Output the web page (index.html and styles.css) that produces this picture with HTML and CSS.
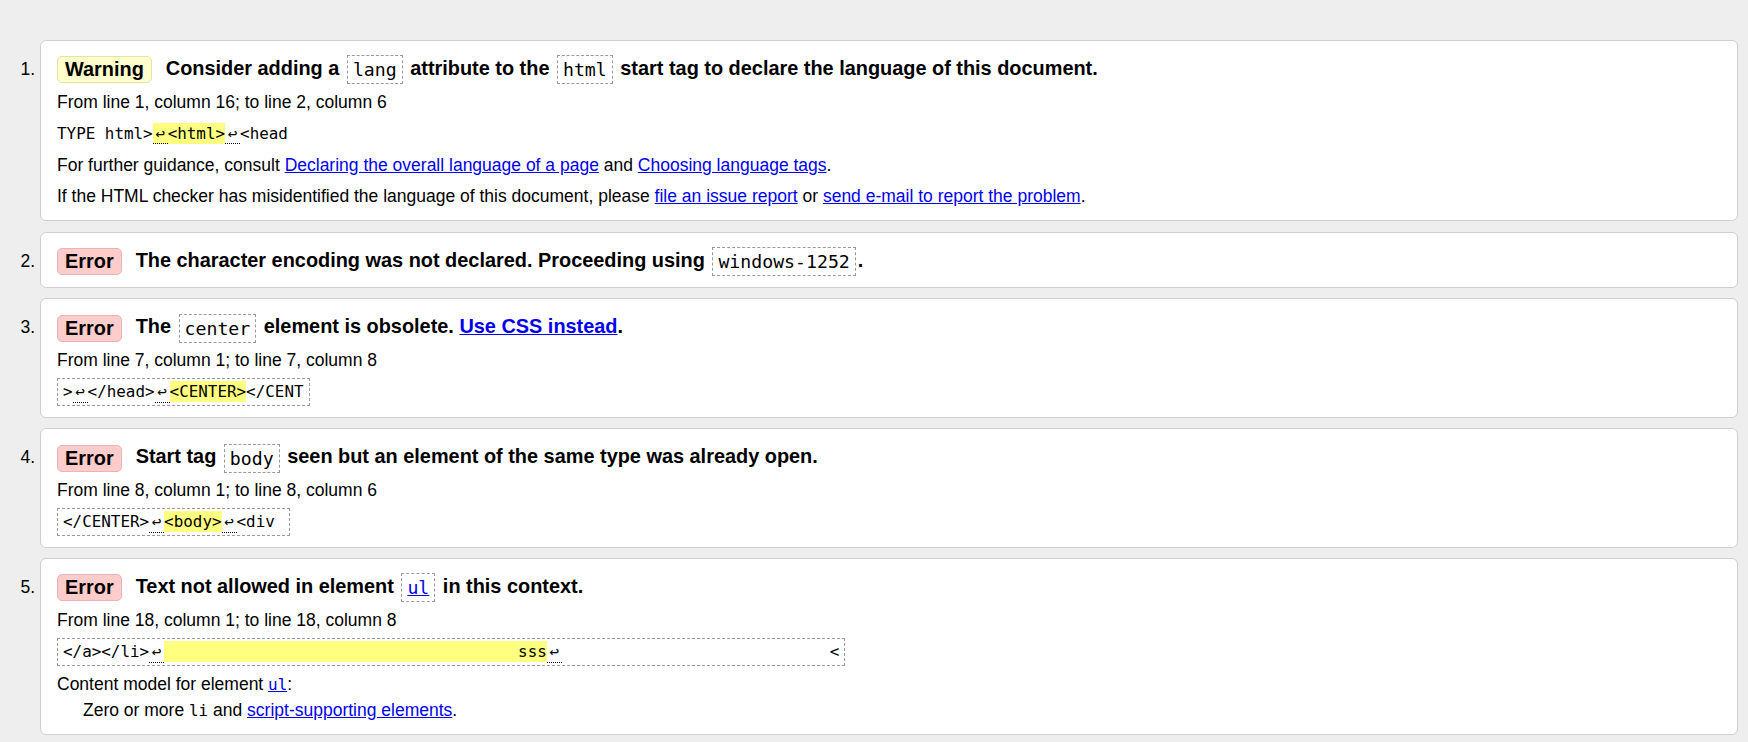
FILE: index.html
```html
<!DOCTYPE html>
<html lang="en">
<head>
<meta charset="utf-8">
<title>Nu Html Checker – results</title>
<link rel="stylesheet" href="styles.css">
</head>
<body>
<ol class="results">
  <li class="msg">
    <p class="head"><strong class="badge warn">Warning</strong>Consider adding a <code class="tag">lang</code> attribute to the <code class="tag">html</code> start tag to declare the language of this document.</p>
    <p class="loc">From line 1, column 16; to line 2, column 6</p>
    <p class="extract plain"><code>TYPE html&gt;<b><span class="lf">↩</span>&lt;html&gt;</b><span class="lf">↩</span>&lt;head</code></p>
    <p class="note">For further guidance, consult <a href="#">Declaring the overall language of a page</a> and <a href="#">Choosing language tags</a>.</p>
    <p class="note">If the HTML checker has misidentified the language of this document, please <a href="#">file an issue report</a> or <a href="#">send e-mail to report the problem</a>.</p>
  </li>
  <li class="msg">
    <p class="head"><strong class="badge err">Error</strong>The character encoding was not declared. Proceeding using <code class="tag">windows-1252</code>.</p>
  </li>
  <li class="msg">
    <p class="head"><strong class="badge err">Error</strong>The <code class="tag">center</code> element is obsolete. <a href="#">Use CSS instead</a>.</p>
    <p class="loc">From line 7, column 1; to line 7, column 8</p>
    <p class="extract box"><code>&gt;<span class="lf">↩</span>&lt;/head&gt;<span class="lf">↩</span><b>&lt;CENTER&gt;</b>&lt;/CENT</code></p>
  </li>
  <li class="msg">
    <p class="head"><strong class="badge err">Error</strong>Start tag <code class="tag">body</code> seen but an element of the same type was already open.</p>
    <p class="loc">From line 8, column 1; to line 8, column 6</p>
    <p class="extract box"><code>&lt;/CENTER&gt;<span class="lf">↩</span><b>&lt;body&gt;</b><span class="lf">↩</span>&lt;div </code></p>
  </li>
  <li class="msg">
    <p class="head"><strong class="badge err">Error</strong>Text not allowed in element <code class="tag"><a href="#">ul</a></code> in this context.</p>
    <p class="loc">From line 18, column 1; to line 18, column 8</p>
    <p class="extract box"><code>&lt;/a&gt;&lt;/li&gt;<span class="lf">↩</span><b>                                     sss</b><span class="lf">↩</span>                            &lt;</code></p>
    <dl class="model">
      <dt>Content model for element <code><a href="#">ul</a></code>:</dt>
      <dd>Zero or more <code>li</code> and <a href="#">script-supporting elements</a>.</dd>
    </dl>
  </li>
</ol>
</body>
</html>
```

FILE: styles.css
```css
* { box-sizing: border-box; }
html, body { margin: 0; padding: 0; background: #eeeeee; }
body {
  font-family: "Liberation Sans", Arial, sans-serif;
  font-size: 17.5px;
  color: #000;
}
a { color: #0000ee; text-decoration: underline; }

.results {
  margin: 40px 10px 0 40px;
  padding: 0;
  list-style: decimal outside;
}
.msg {
  background: #fff;
  border: 1px solid #cfcfcf;
  border-radius: 6px;
  padding: 13px 16px 11px;
  margin: 0 0 10.5px;
}
.msg p { margin: 0; line-height: 19px; }
.msg > :last-child { margin-bottom: 3px; }
.msg > .head:last-child { margin-bottom: 1px; }
.msg > .extract.box:last-child { margin-bottom: 0; }

.msg .head {
  font-weight: bold;
  font-size: 19.9px;
  line-height: 29px;
  height: 29px;
}
.badge {
  display: inline-block;
  vertical-align: middle;
  line-height: 19px;
  padding: 3px 7px;
  border: 1px solid;
  border-radius: 5px;
  margin-right: 14px;
  font-weight: bold;
}
.badge.warn { background: #ffffcc; border-color: #e3e3a8; }
.badge.err { background: #ffcccc; border-color: #e8b4b4; }

code {
  font-family: "DejaVu Sans Mono", "Liberation Mono", monospace;
  font-size: 15.9px;
  font-weight: normal;
}
code.tag {
  display: inline-block;
  vertical-align: middle;
  font-size: 18.2px;
  line-height: 21px;
  padding: 3px 5px;
  border: 1px dashed #9a9a9a;
  margin: 0 2px;
}

.msg .loc { margin-top: 9.5px; }
.msg .note { margin-top: 12px; }

.extract code { white-space: pre; }
.extract b {
  font-weight: normal;
  background: #ffff80;
  padding: 1px 0;
}
.lf {
  display: inline-block;
  width: 15px;
  text-align: center;
  line-height: 15.9px;
  padding-bottom: 2px;
  border-bottom: 1px dotted #000;
}
.msg .extract.plain { margin-top: 12px; }
.msg .extract.box {
  margin-top: 8px;
  width: fit-content;
  border: 1px dashed #9a9a9a;
  padding: 2px 5px;
  line-height: 20px;
}

.model { margin: 9.5px 0 5.5px; line-height: 19px; }
.model dt { margin: 0; }
.model dd { margin: 7px 0 0 26px; }
```
